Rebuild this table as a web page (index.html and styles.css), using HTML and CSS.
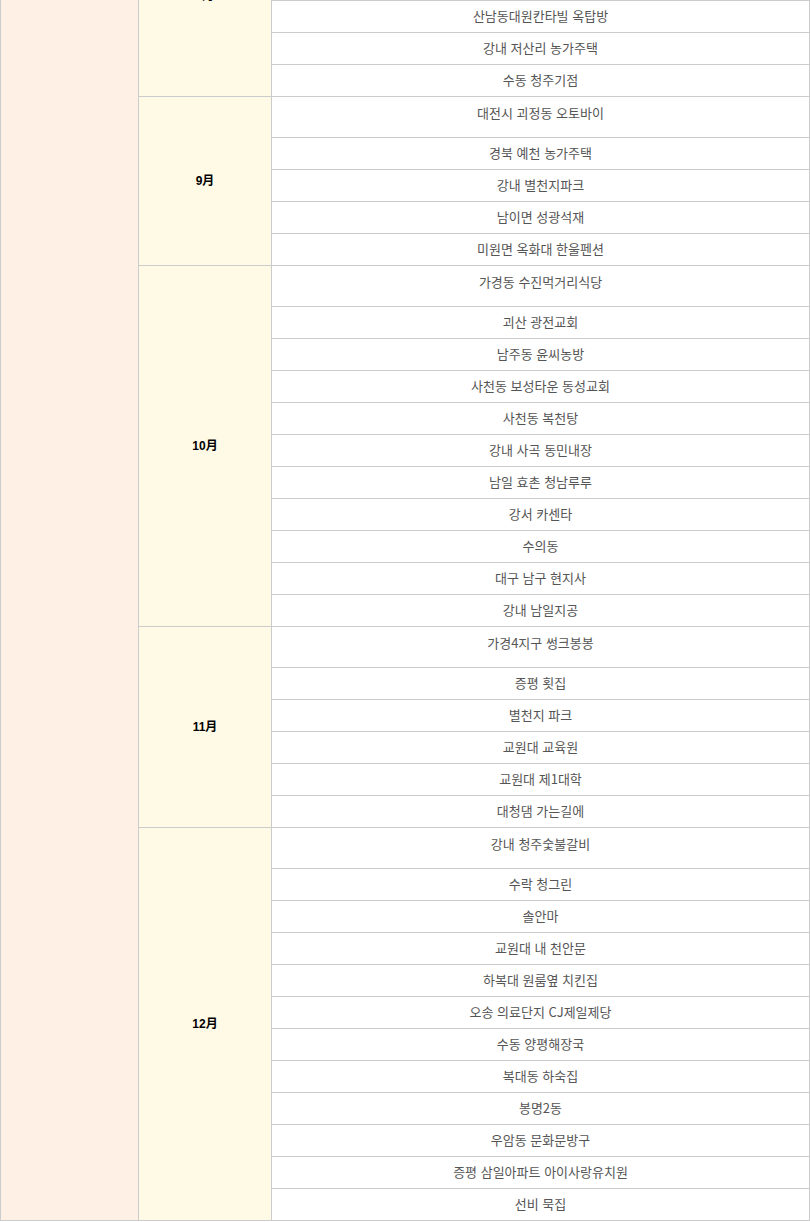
FILE: index.html
```html
<!DOCTYPE html>
<html lang="ko">
    <head>
        <meta charset="utf-8">
        <meta name="viewport" content="width=device-width, initial-scale=1">
        <title>배달 기록</title>
        <link rel="stylesheet" href="styles.css">
    </head>
    <body>
        <table class="log">
            <colgroup>
                <col class="col-year">
                <col class="col-month">
                <col>
            </colgroup>
            <tbody>
                <!-- 8월 (앞 부분은 화면 위로 스크롤됨) -->
                <tr class="first">
                    <td class="year" rowspan="40"></td>
                    <th class="month" rowspan="6">8月</th>
                    <td>&nbsp;</td>
                </tr>
                <tr><td>&nbsp;</td></tr>
                <tr><td>&nbsp;</td></tr>
                <tr><td>산남동대원칸타빌 옥탑방</td></tr>
                <tr><td>강내 저산리 농가주택</td></tr>
                <tr><td>수동 청주기점</td></tr>
                <!-- 9월 -->
                <tr class="first">
                    <th class="month" rowspan="5">9月</th>
                    <td>대전시 괴정동 오토바이</td>
                </tr>
                <tr><td>경북 예천 농가주택</td></tr>
                <tr><td>강내 별천지파크</td></tr>
                <tr><td>남이면 성광석재</td></tr>
                <tr><td>미원면 옥화대 한울펜션</td></tr>
                <!-- 10월 -->
                <tr class="first">
                    <th class="month" rowspan="11">10月</th>
                    <td>가경동 수진먹거리식당</td>
                </tr>
                <tr><td>괴산 광전교회</td></tr>
                <tr><td>남주동 윤씨농방</td></tr>
                <tr><td>사천동 보성타운 동성교회</td></tr>
                <tr><td>사천동 복천탕</td></tr>
                <tr><td>강내 사곡 동민내장</td></tr>
                <tr><td>남일 효촌 청남루루</td></tr>
                <tr><td>강서 카센타</td></tr>
                <tr><td>수의동</td></tr>
                <tr><td>대구 남구 현지사</td></tr>
                <tr><td>강내 남일지공</td></tr>
                <!-- 11월 -->
                <tr class="first">
                    <th class="month" rowspan="6">11月</th>
                    <td>가경4지구 썽크봉봉</td>
                </tr>
                <tr><td>증평 횟집</td></tr>
                <tr><td>별천지 파크</td></tr>
                <tr><td>교원대 교육원</td></tr>
                <tr><td>교원대 제1대학</td></tr>
                <tr><td>대청댐 가는길에</td></tr>
                <!-- 12월 -->
                <tr class="first">
                    <th class="month" rowspan="12">12月</th>
                    <td>강내 청주숯불갈비</td>
                </tr>
                <tr><td>수락 청그린</td></tr>
                <tr><td>솔안마</td></tr>
                <tr><td>교원대 내 천안문</td></tr>
                <tr><td>하복대 원룸옆 치킨집</td></tr>
                <tr><td>오송 의료단지 CJ제일제당</td></tr>
                <tr><td>수동 양평해장국</td></tr>
                <tr><td>복대동 하숙집</td></tr>
                <tr><td>봉명2동</td></tr>
                <tr><td>우암동 문화문방구</td></tr>
                <tr><td>증평 삼일아파트 아이사랑유치원</td></tr>
                <tr><td>선비 묵집</td></tr>
            </tbody>
        </table>
    </body>
</html>
```

FILE: styles.css
```css
body {
    margin: 0;
    font-family: "Noto Sans CJK KR", "Liberation Sans", sans-serif;
    background: #fff;
}
.log {
    width: 810px;
    table-layout: fixed;
    border-collapse: collapse;
    border: 1px solid #ccc;
    /* 페이지가 8월 중간쯤 스크롤된 상태 */
    margin-top: -105px;
}
.col-year {
    width: 138px;
}
.col-month {
    width: 133px;
}
.log td, .log th {
    border: 1px solid #ccc;
    padding: 0;
}
.log td {
    height: 31px;
    line-height: 30px;
    padding-bottom: 1px;
    box-sizing: border-box;
    font-size: 13px;
    color: #555;
    text-align: center;
    white-space: nowrap;
}
.log tr.first td {
    height: 40px;
    padding: 1px 0 9px;
}
.log td.year {
    background: #fff0e6;
}
.log th.month {
    background: #fffae6;
    font-family: "Liberation Sans", "Noto Sans CJK KR", sans-serif;
    font-size: 12px;
    line-height: 14px;
    font-weight: bold;
    color: #000;
    text-align: center;
    vertical-align: middle;
    padding-bottom: 1px;
}
```
